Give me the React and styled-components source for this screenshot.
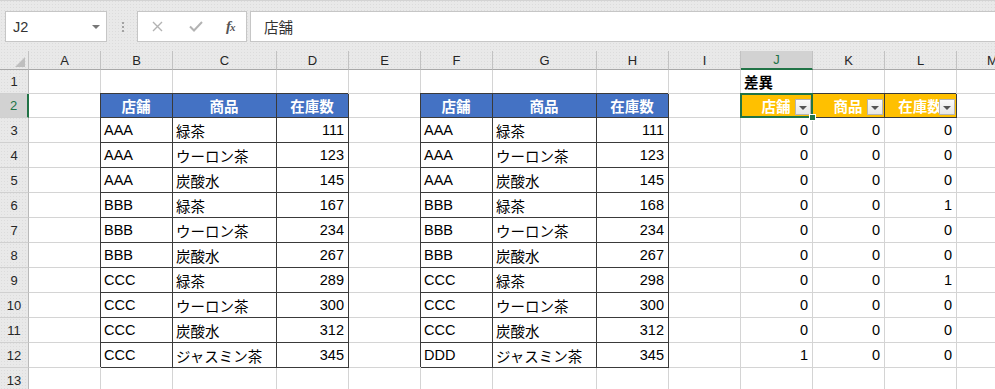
import React from "react";
import styled, { createGlobalStyle, css } from "styled-components";

const GRID = "#d4d4d4";
const DARK = "#3a3a3a";
const GREEN = "#217346";
const FONT = `"Liberation Sans", "Noto Sans CJK JP", sans-serif`;

const GlobalStyle = createGlobalStyle`
  html, body { margin: 0; padding: 0; background: #fff; overflow: hidden; }
  body { font-family: ${FONT}; }
`;

const dotted = css`
  background-color: #e9e9e9;
  background-image: radial-gradient(#dcdcdc 0.7px, transparent 0.9px);
  background-size: 3px 3px;
`;

const Window = styled.div`
  width: 995px;
  height: 389px;
  overflow: hidden;
  display: flex;
  flex-direction: column;
  ${dotted};
`;

const TopEdge = styled.div`
  height: 2px;
  background: #f6f6f6;
  border-bottom: 1px solid #d3d3d3;
`;

const FormulaBar = styled.div`
  display: flex;
  align-items: center;
  height: 31px;
  padding: 10px 0 9px 5px;
`;

const Box = styled.div`
  box-sizing: border-box;
  height: 31px;
  background: #fff;
  border: 1px solid #c6c6c6;
  display: flex;
  align-items: center;
`;

const NameBox = styled(Box)`
  width: 102px;
  padding: 0 6px 0 7px;
  justify-content: space-between;
  font-size: 14.5px;
  color: #333;
`;

const Caret = styled.span`
  width: 0;
  height: 0;
  border-left: 4px solid transparent;
  border-right: 4px solid transparent;
  border-top: 4px solid #777;
`;

const Splitter = styled.div`
  display: flex;
  flex-direction: column;
  gap: 2px;
  margin: 0 13px 0 15px;
  span {
    width: 2px;
    height: 2px;
    background: #a3a3a3;
  }
`;

const FuncBox = styled(Box)`
  width: 110px;
  padding: 0 0 0 14px;
  color: #b0b0b0;
`;

const IconSlot = styled.span`
  width: 37px;
  display: flex;
  align-items: center;
`;

const Fx = styled.span`
  font-family: "Liberation Serif", serif;
  font-style: italic;
  font-weight: bold;
  font-size: 15px;
  color: #555;
  letter-spacing: -1px;
  sub {
    font-size: 11px;
    vertical-align: 0;
  }
`;

const FormulaInput = styled(Box)`
  flex: 1;
  margin: 0 -2px 0 3px;
  padding-left: 13px;
  font-size: 14.5px;
  color: #333;
`;

const Sheet = styled.div`
  display: grid;
  grid-template-columns: 29px repeat(2, 72px) 104px repeat(3, 72px) 104px repeat(6, 72px);
  grid-template-rows: 19px 24px 24px repeat(11, 25px);
  width: 1029px;
`;

const Corner = styled.div`
  box-sizing: border-box;
  border-right: 1px solid #c2c2c2;
  border-bottom: 1px solid #a8a8a8;
  display: flex;
  align-items: flex-end;
  justify-content: flex-end;
  padding: 0 3px 2px 0;
`;

const ColHead = styled.div`
  box-sizing: border-box;
  border-right: 1px solid #c2c2c2;
  border-bottom: 1px solid #a8a8a8;
  display: flex;
  align-items: center;
  justify-content: center;
  font-size: 13px;
  color: #262626;
  ${(p) =>
    p.$active &&
    css`
      background: #d2d2d2;
      color: ${GREEN};
      border-bottom: 2px solid ${GREEN};
    `}
`;

const RowHead = styled.div`
  box-sizing: border-box;
  border-right: 1px solid #b9b9b9;
  border-bottom: 1px solid #d0d0d0;
  display: flex;
  align-items: center;
  justify-content: center;
  font-size: 13px;
  color: #262626;
  ${(p) =>
    p.$active &&
    css`
      background: #d2d2d2;
      color: ${GREEN};
      border-right: 2px solid ${GREEN};
    `}
`;

const Cell = styled.div`
  position: relative;
  box-sizing: border-box;
  background: #fff;
  border-right: 1px solid ${GRID};
  border-bottom: 1px solid ${GRID};
  display: flex;
  align-items: center;
  justify-content: ${(p) =>
    p.$align === "right" ? "flex-end" : p.$align === "center" ? "center" : "flex-start"};
  padding: 0 4px 0 3px;
  font-size: 14.5px;
  color: #000;
  white-space: nowrap;
  ${(p) => p.$bold && css`font-weight: bold;`}
  ${(p) =>
    p.$boxed &&
    css`
      border-right-color: ${DARK};
      border-bottom-color: ${DARK};
      box-shadow: -1px -1px 0 0 ${DARK};
    `}
  ${(p) =>
    p.$fill &&
    css`
      background: ${p.$fill};
      color: #fff;
      font-weight: bold;
    `}
`;

const Selection = styled.span`
  position: absolute;
  z-index: 3;
  top: -1px;
  left: -1px;
  right: -1px;
  bottom: -1px;
  border: 2px solid ${GREEN};
  pointer-events: none;
  &::after {
    content: "";
    position: absolute;
    right: -5px;
    bottom: -5px;
    width: 5px;
    height: 5px;
    background: ${GREEN};
    border: 1px solid #fff;
  }
`;

const FilterButton = styled.span`
  position: absolute;
  right: 1px;
  bottom: 2px;
  width: 16px;
  height: 16px;
  box-sizing: border-box;
  background: linear-gradient(#fbfbfb, #e6e6e6);
  border: 1px solid #b4b4b4;
  display: flex;
  align-items: center;
  justify-content: center;
  &::after {
    content: "";
    border-left: 4px solid transparent;
    border-right: 4px solid transparent;
    border-top: 4px solid #555;
    margin-top: 2px;
  }
`;

const COLS = ["A", "B", "C", "D", "E", "F", "G", "H", "I", "J", "K", "L", "M"];

const left = [
  ["AAA", "緑茶", 111],
  ["AAA", "ウーロン茶", 123],
  ["AAA", "炭酸水", 145],
  ["BBB", "緑茶", 167],
  ["BBB", "ウーロン茶", 234],
  ["BBB", "炭酸水", 267],
  ["CCC", "緑茶", 289],
  ["CCC", "ウーロン茶", 300],
  ["CCC", "炭酸水", 312],
  ["CCC", "ジャスミン茶", 345],
];

const right = [
  ["AAA", "緑茶", 111],
  ["AAA", "ウーロン茶", 123],
  ["AAA", "炭酸水", 145],
  ["BBB", "緑茶", 168],
  ["BBB", "ウーロン茶", 234],
  ["BBB", "炭酸水", 267],
  ["CCC", "緑茶", 298],
  ["CCC", "ウーロン茶", 300],
  ["CCC", "炭酸水", 312],
  ["DDD", "ジャスミン茶", 345],
];

const HEAD = ["店舗", "商品", "在庫数"];
const BLUE = "#4472c4";
const ORANGE = "#ffc000";

function rowCells(r) {
  const e = (k) => <Cell key={k} />;
  if (r === 1) {
    return COLS.map((c) =>
      c === "J" ? (
        <Cell key={c} $bold>
          差異
        </Cell>
      ) : (
        e(c)
      )
    );
  }
  if (r === 2) {
    return [
      e("A"),
      ...HEAD.map((h) => (
        <Cell key={"l" + h} $boxed $fill={BLUE} $align="center">
          {h}
        </Cell>
      )),
      e("E"),
      ...HEAD.map((h) => (
        <Cell key={"r" + h} $boxed $fill={BLUE} $align="center">
          {h}
        </Cell>
      )),
      e("I"),
      ...HEAD.map((h, i) => (
        <Cell key={"d" + h} $boxed $fill={ORANGE} $align="center">
          {h}
          <FilterButton />
          {i === 0 && <Selection />}
        </Cell>
      )),
      e("M"),
    ];
  }
  if (r >= 3 && r <= 12) {
    const a = left[r - 3];
    const b = right[r - 3];
    const diff = a.map((v, i) => (v === b[i] ? 0 : 1));
    return [
      e("A"),
      <Cell key="B" $boxed>{a[0]}</Cell>,
      <Cell key="C" $boxed>{a[1]}</Cell>,
      <Cell key="D" $boxed $align="right">{a[2]}</Cell>,
      e("E"),
      <Cell key="F" $boxed>{b[0]}</Cell>,
      <Cell key="G" $boxed>{b[1]}</Cell>,
      <Cell key="H" $boxed $align="right">{b[2]}</Cell>,
      e("I"),
      ...diff.map((d, i) => (
        <Cell key={"x" + i} $align="right">
          {d}
        </Cell>
      )),
      e("M"),
    ];
  }
  return COLS.map((c) => e(c));
}

const ROWS = Array.from({ length: 13 }, (_, i) => i + 1);

export default function App() {
  return (
    <>
      <GlobalStyle />
      <Window>
        <TopEdge />
        <FormulaBar>
          <NameBox>
            J2
            <Caret />
          </NameBox>
          <Splitter>
            <span />
            <span />
            <span />
          </Splitter>
          <FuncBox>
            <IconSlot>
              <svg width="11" height="11" viewBox="0 0 11 11">
                <path d="M1 1L10 10M10 1L1 10" stroke="#b3b3b3" strokeWidth="1.4" fill="none" />
              </svg>
            </IconSlot>
            <IconSlot>
              <svg width="14" height="11" viewBox="0 0 14 11">
                <path d="M1 5.5L5 9.5L13 1" stroke="#b3b3b3" strokeWidth="2" fill="none" />
              </svg>
            </IconSlot>
            <Fx>
              f<sub>x</sub>
            </Fx>
          </FuncBox>
          <FormulaInput>店舗</FormulaInput>
        </FormulaBar>
        <Sheet>
          <Corner>
            <svg width="10" height="10" viewBox="0 0 10 10">
              <polygon points="10,0 10,10 0,10" fill="#bfbfbf" />
            </svg>
          </Corner>
          {COLS.map((c) => (
            <ColHead key={c} $active={c === "J"}>
              {c}
            </ColHead>
          ))}
          {ROWS.map((r) => (
            <React.Fragment key={r}>
              <RowHead $active={r === 2}>{r}</RowHead>
              {rowCells(r)}
            </React.Fragment>
          ))}
        </Sheet>
      </Window>
    </>
  );
}
